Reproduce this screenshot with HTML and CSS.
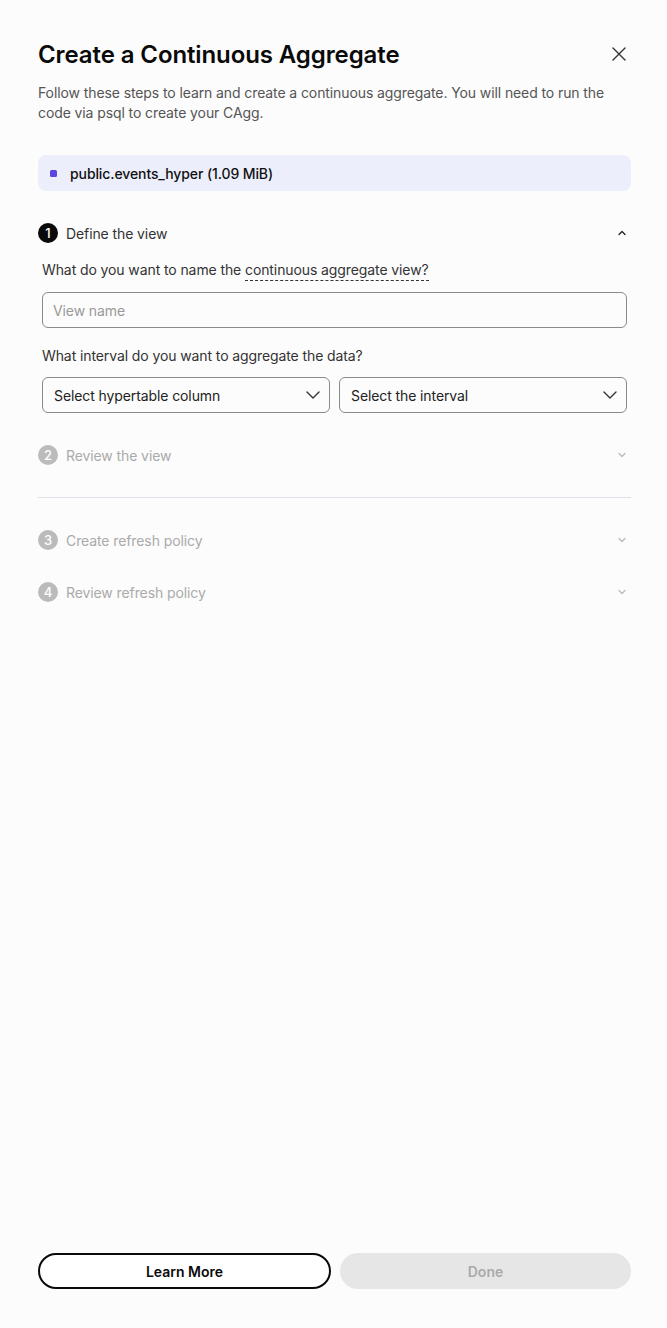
FILE: index.html
```html
<!DOCTYPE html>
<html>
<head>
<meta charset="utf-8">
<link rel="stylesheet" href="styles.css">
</head>
<body>
<div class="panel">
  <div class="main">
    <div class="header">
      <h1 class="title">Create a Continuous Aggregate</h1>
      <button class="close" aria-label="Close">
        <svg width="16" height="16" viewBox="0 0 16 16"><path d="M2 2L14 14M14 2L2 14" stroke="#333" stroke-width="1.4" fill="none" stroke-linecap="round"/></svg>
      </button>
    </div>
    <p class="desc">Follow these steps to learn and create a continuous aggregate. You will need to run the code via psql to create your CAgg.</p>
    <div class="table-pill"><span class="dot"></span><span>public.events_hyper (1.09 MiB)</span></div>

    <div class="step active">
      <div class="step-head">
        <span class="num">1</span><span class="step-title">Define the view</span>
        <svg class="chev" width="10" height="10" viewBox="0 0 10 10"><path d="M2 6.5L5 3.5L8 6.5" stroke="#222" stroke-width="1.3" fill="none" stroke-linecap="round" stroke-linejoin="round"/></svg>
      </div>
      <div class="step-body">
        <label class="q">What do you want to name the <span class="dotted">continuous aggregate view?</span></label>
        <div class="input">View name</div>
        <label class="q">What interval do you want to aggregate the data?</label>
        <div class="selects">
          <div class="select"><span>Select hypertable column</span><svg width="16" height="16" viewBox="0 0 16 16"><path d="M2 5L8 11L14 5" stroke="#333" stroke-width="1.4" fill="none" stroke-linecap="round" stroke-linejoin="round"/></svg></div>
          <div class="select"><span>Select the interval</span><svg width="16" height="16" viewBox="0 0 16 16"><path d="M2 5L8 11L14 5" stroke="#333" stroke-width="1.4" fill="none" stroke-linecap="round" stroke-linejoin="round"/></svg></div>
        </div>
      </div>
    </div>

    <div class="step inactive first-inactive">
      <div class="step-head">
        <span class="num">2</span><span class="step-title">Review the view</span>
        <svg class="chev" width="10" height="10" viewBox="0 0 10 10"><path d="M2 3.5L5 6.5L8 3.5" stroke="#bbb" stroke-width="1.3" fill="none" stroke-linecap="round" stroke-linejoin="round"/></svg>
      </div>
    </div>
    <hr class="divider">
    <div class="step inactive">
      <div class="step-head">
        <span class="num">3</span><span class="step-title">Create refresh policy</span>
        <svg class="chev" width="10" height="10" viewBox="0 0 10 10"><path d="M2 3.5L5 6.5L8 3.5" stroke="#bbb" stroke-width="1.3" fill="none" stroke-linecap="round" stroke-linejoin="round"/></svg>
      </div>
    </div>
    <div class="step inactive">
      <div class="step-head">
        <span class="num">4</span><span class="step-title">Review refresh policy</span>
        <svg class="chev" width="10" height="10" viewBox="0 0 10 10"><path d="M2 3.5L5 6.5L8 3.5" stroke="#bbb" stroke-width="1.3" fill="none" stroke-linecap="round" stroke-linejoin="round"/></svg>
      </div>
    </div>
  </div>
  <div class="footer">
    <button class="btn btn-outline">Learn More</button>
    <button class="btn btn-disabled">Done</button>
  </div>
</div>
</body>
</html>
```
FILE: styles.css
```css
* { box-sizing: border-box; }
html, body { margin: 0; padding: 0; }
body {
  background: #fcfcfc;
  font-family: Inter, "Noto Sans", sans-serif;
  color: #222;
  letter-spacing: -0.1px;
}
.panel {
  height: 1328px;
  display: flex;
  flex-direction: column;
  padding: 38px 36px 39px 38px;
}
.main { flex: 1; }
.header {
  display: flex;
  align-items: center;
  justify-content: space-between;
  height: 32px;
}
.title {
  margin: 0;
  font-size: 24px;
  font-weight: 600;
  letter-spacing: -0.1px;
  color: #0a0a0a;
}
.close {
  background: none;
  border: 0;
  padding: 0;
  width: 20px;
  height: 20px;
  display: flex;
  align-items: center;
  justify-content: center;
  margin-right: 2px;
}
.desc {
  margin: 13px 0 0;
  font-size: 14px;
  line-height: 20px;
  color: #555;
}
.table-pill {
  margin-top: 32px;
  height: 36px;
  border-radius: 8px;
  background: #eceefb;
  display: flex;
  align-items: center;
  padding-left: 12px;
  gap: 13px;
  font-size: 14px;
  font-weight: 500;
  color: #111;
}
.dot {
  width: 7px;
  height: 7px;
  border-radius: 1.5px;
  background: #5b45e0;
}
.step-head {
  display: flex;
  align-items: center;
  height: 20px;
  gap: 8px;
}
.num {
  width: 20px;
  height: 20px;
  border-radius: 50%;
  background: #0a0a0a;
  color: #fff;
  font-size: 13px;
  font-weight: 500;
  display: flex;
  align-items: center;
  justify-content: center;
}
.step-title {
  font-size: 14px;
  color: #333;
  flex: 1;
}
.chev { margin-right: 4px; }
.step.active { margin-top: 32px; }
.step-body { padding: 0 4px; }
.q {
  display: block;
  margin-top: 18px;
  font-size: 14px;
  line-height: 18px;
  color: #333;
}
.dotted {
  border-bottom: 1px dashed #333;
  padding-bottom: 2px;
}
.input {
  margin-top: 13px;
  height: 36px;
  border: 1px solid #8a8a8a;
  border-radius: 6px;
  display: flex;
  align-items: center;
  padding-left: 10px;
  font-size: 14px;
  color: #999;
}
.input + .q { margin-top: 19px; }
.selects {
  margin-top: 12px;
  display: grid;
  grid-template-columns: 1fr 1fr;
  gap: 9px;
}
.select {
  height: 36px;
  border: 1px solid #8a8a8a;
  border-radius: 6px;
  display: flex;
  align-items: center;
  justify-content: space-between;
  padding: 0 8px 0 11px;
  font-size: 14px;
  color: #222;
}
.step.inactive .num { background: #bbb; }
.step.inactive .step-title { color: #aaa; }
.first-inactive { margin-top: 32px; }
.divider {
  margin: 32px 0 32px;
  border: 0;
  border-top: 1px solid #dfe0e8;
}
.step.inactive + .step.inactive { margin-top: 32px; }
.footer {
  display: grid;
  grid-template-columns: 293px 1fr;
  gap: 9px;
}
.btn {
  height: 36px;
  border-radius: 18px;
  font-family: Inter, "Noto Sans", sans-serif;
  font-size: 14px;
  font-weight: 600;
}
.btn-outline {
  background: #fff;
  border: 2px solid #0a0a0a;
  color: #0a0a0a;
}
.btn-disabled {
  background: #e6e6e7;
  border: 0;
  color: #aaa;
}
```
